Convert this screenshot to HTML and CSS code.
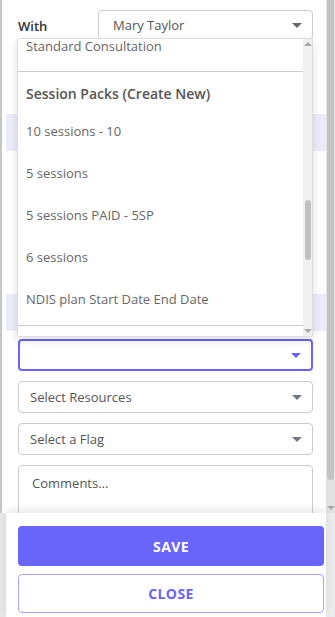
FILE: index.html
```html
<!DOCTYPE html>
<html lang="en">
<head>
    <meta charset="UTF-8">
    <meta name="viewport" content="width=device-width, initial-scale=1.0">
    <title>Appointment</title>
    <link rel="stylesheet" href="styles.css">
</head>
<body>

<div class="app">
    <div class="rail-left">
        <div class="rail-top"></div>
        <div class="rail-bottom"></div>
    </div>

    <div class="main">
        <div class="content">
            <div class="with-row">
                <label class="with-label">With</label>
                <div class="select with-select">
                    <span>Mary Taylor</span>
                    <span class="caret"></span>
                </div>
            </div>

            <div class="spacer-a"></div>
            <div class="band"></div>
            <div class="spacer-b"></div>
            <div class="band"></div>

            <div class="select focused">
                <span class="caret"></span>
            </div>
            <div class="select">
                <span class="placeholder">Select Resources</span>
                <span class="caret"></span>
            </div>
            <div class="select">
                <span class="placeholder">Select a Flag</span>
                <span class="caret"></span>
            </div>
            <div class="comments">Comments...</div>

            <!-- open dropdown for the service field -->
            <div class="dropdown">
                <div class="options">
                    <div class="group first">
                        <div class="option">Standard Consultation</div>
                    </div>
                    <div class="group">
                        <div class="group-title">Session Packs (Create New)</div>
                        <div class="option">10 sessions - 10</div>
                        <div class="option">5 sessions</div>
                        <div class="option">5 sessions PAID - 5SP</div>
                        <div class="option">6 sessions</div>
                        <div class="option">NDIS plan Start Date End Date</div>
                    </div>
                </div>
                <div class="dd-scroll">
                    <span class="arrow-up"></span>
                    <span class="dd-thumb"></span>
                    <span class="arrow-down"></span>
                </div>
            </div>
        </div>

        <div class="footer">
            <button type="button" class="btn btn-save">SAVE</button>
            <button type="button" class="btn btn-close">CLOSE</button>
        </div>
    </div>

    <div class="rail-right">
        <div class="page-scroll">
            <span class="page-thumb"></span>
            <span class="arrow-down"></span>
        </div>
        <div class="rail-bottom"></div>
    </div>
</div>

</body>
</html>
```

FILE: styles.css
```css
body {
    margin: 0;
    font-family: 'Open Sans', 'Noto Sans', sans-serif;
    background: #fff;
    color: #555;
}
.app {
    display: flex;
    height: 617px;
    overflow: hidden;
}
.rail-left {
    width: 6px;
    display: flex;
    flex-direction: column;
}
.rail-top {
    flex: 1;
    background: linear-gradient(to right, #c6c6c6 2px, #fff 2px);
}
.rail-bottom {
    height: 104px;
    background: #e8e8e8;
}
.main {
    flex: 1;
    display: flex;
    flex-direction: column;
    min-width: 0;
}
.content {
    position: relative;
    height: 513px;
    overflow: hidden;
    padding: 0 13px 0 12px;
    display: flex;
    flex-direction: column;
}
.with-row {
    display: flex;
    align-items: center;
    margin-top: 10px;
}
.with-label {
    width: 80px;
    font-size: 13px;
    font-weight: 600;
    color: #333;
    padding-top: 2px;
}
.select {
    box-sizing: border-box;
    height: 32px;
    border: 1px solid #ccc;
    border-radius: 4px;
    display: flex;
    align-items: center;
    justify-content: space-between;
    padding: 0 10px 0 11px;
    font-size: 13px;
    color: #555;
    margin-bottom: 10px;
    flex-shrink: 0;
}
.with-select {
    flex: 1;
    height: 30px;
    margin-bottom: 0;
    padding-left: 14px;
}
.caret {
    width: 0;
    height: 0;
    border-left: 5px solid transparent;
    border-right: 5px solid transparent;
    border-top: 5px solid #6f7784;
}
.with-select .caret {
    border-top-color: #666;
}
.focused {
    justify-content: flex-end;
    border: 2px solid #6a64fa;
    margin-top: 8px;
}
.focused .caret {
    border-top-color: #6a64fa;
}
.placeholder {
    color: #555;
}
.spacer-a {
    height: 74px;
    flex-shrink: 0;
}
.spacer-b {
    height: 143px;
    flex-shrink: 0;
}
.band {
    height: 37px;
    flex-shrink: 0;
    margin: 0 -13px 0 -12px;
    background: #ebebfa;
}
.comments {
    box-sizing: border-box;
    height: 80px;
    flex-shrink: 0;
    border: 1px solid #ccc;
    border-radius: 4px;
    padding: 8px 13px;
    font-size: 13px;
    color: #555;
}

/* dropdown list */
.dropdown {
    position: absolute;
    top: 38px;
    left: 11px;
    width: 296px;
    height: 299px;
    box-sizing: border-box;
    border: 1px solid #ddd;
    border-radius: 2px;
    background: #fff;
    box-shadow: 0 4px 10px rgba(0,0,0,0.12);
    display: flex;
}
.options {
    flex: 1;
    overflow: hidden;
}
.group {
    padding-bottom: 4px;
    border-bottom: 1px solid #ccc;
}
.group + .group {
    padding-bottom: 5px;
}
.group.first {
    margin-top: -14px;
}
.group-title {
    padding: 12px 8px 6px;
    line-height: 20px;
    font-size: 14px;
    font-weight: 600;
    color: #555;
}
.option {
    height: 42px;
    line-height: 42px;
    padding: 0 8px;
    font-size: 13px;
    color: #666;
    white-space: nowrap;
}
.dd-scroll {
    width: 9px;
    background: #f1f1f1;
    display: flex;
    flex-direction: column;
    align-items: center;
}
.arrow-up {
    margin-top: 3px;
    width: 0;
    height: 0;
    border-left: 4px solid transparent;
    border-right: 4px solid transparent;
    border-bottom: 4px solid #a8a8a8;
}
.arrow-down {
    width: 0;
    height: 0;
    border-left: 4px solid transparent;
    border-right: 4px solid transparent;
    border-top: 4px solid #a8a8a8;
}
.dd-thumb {
    margin-top: 154px;
    width: 6px;
    height: 60px;
    border-radius: 3px;
    background: #c1c1c1;
}
.dd-scroll .arrow-down {
    margin-top: auto;
    margin-bottom: 3px;
}

/* footer */
.footer {
    flex: 1;
    background: #fff;
    box-shadow: 0 -4px 8px rgba(0,0,0,0.08);
    padding: 13px 2px 0 12px;
    display: flex;
    flex-direction: column;
    gap: 8px;
    position: relative;
}
.btn {
    font-family: 'Open Sans', 'Noto Sans', sans-serif;
    font-size: 14px;
    font-weight: 700;
    letter-spacing: 0.4px;
    border-radius: 4px;
    cursor: pointer;
}
.btn-save {
    height: 40px;
    background: #6964fa;
    color: #fff;
    border: none;
}
.btn-close {
    height: 39px;
    background: #fff;
    color: #6964fa;
    border: 1px solid #a8a4fd;
}

/* page scrollbar */
.rail-right {
    width: 9px;
    display: flex;
    flex-direction: column;
    background: #ebebeb;
}
.page-scroll {
    height: 513px;
    display: flex;
    flex-direction: column;
    align-items: center;
    background: #e2e2e2;
}
.page-thumb {
    width: 7px;
    height: 480px;
    border-radius: 0 0 3px 3px;
    background: #c3c3c3;
}
.page-scroll .arrow-down {
    margin-top: auto;
    margin-bottom: 3px;
}
.rail-right .rail-bottom {
    background: #ebebeb;
}
```
